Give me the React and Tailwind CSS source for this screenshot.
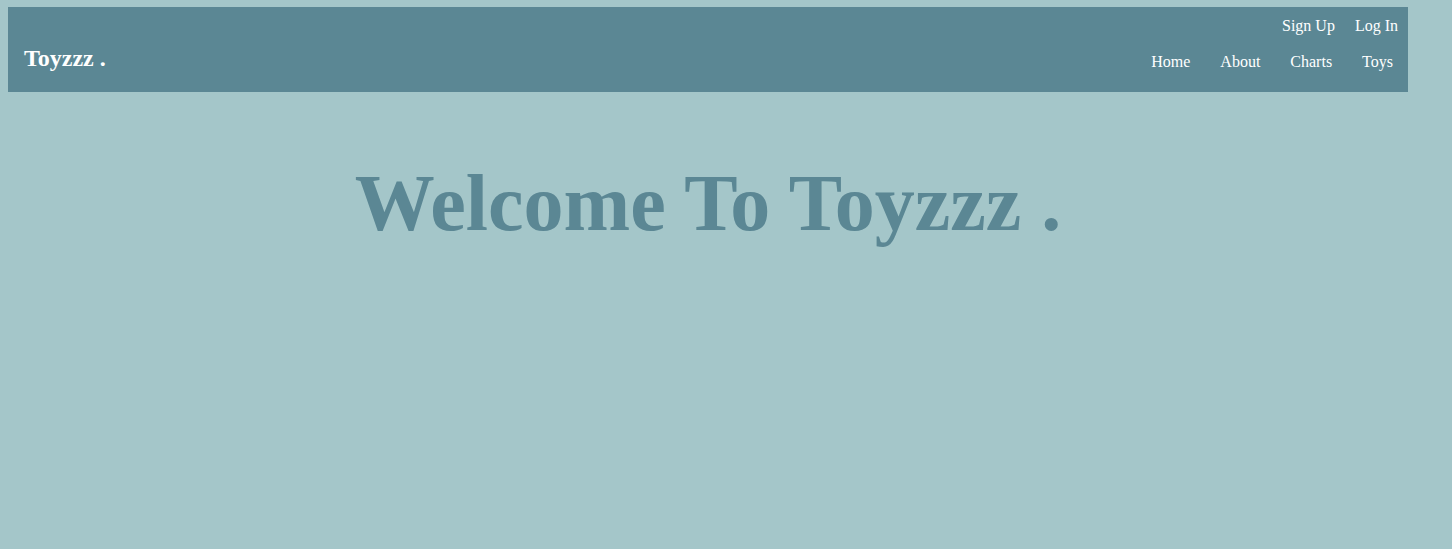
export default function App() {
  return (
    <div className="min-h-screen bg-[#a4c6c9] px-2 pt-[7px]" style={{ fontFamily: '"Liberation Serif", "Times New Roman", serif' }}>
      <header className="w-[1400px] h-[85px] bg-[#5b8794] flex justify-between text-white">
        <div className="pl-4 pt-[37px] text-2xl font-bold leading-[28px]">Toyzzz .</div>
        <nav className="flex flex-col items-end pt-[10px]">
          <div className="flex gap-5 pr-[10px] text-base leading-[18px]">
            <a href="#">Sign Up</a>
            <a href="#">Log In</a>
          </div>
          <div className="flex gap-[30px] pr-[15px] mt-[18px] text-base leading-[18px]">
            <a href="#">Home</a>
            <a href="#">About</a>
            <a href="#">Charts</a>
            <a href="#">Toys</a>
          </div>
        </nav>
      </header>
      <main className="w-[1400px]">
        <h1 className="mt-[66px] text-center text-[80px] font-bold leading-[90px] text-[#5b8794]">Welcome To Toyzzz .</h1>
      </main>
    </div>
  );
}
